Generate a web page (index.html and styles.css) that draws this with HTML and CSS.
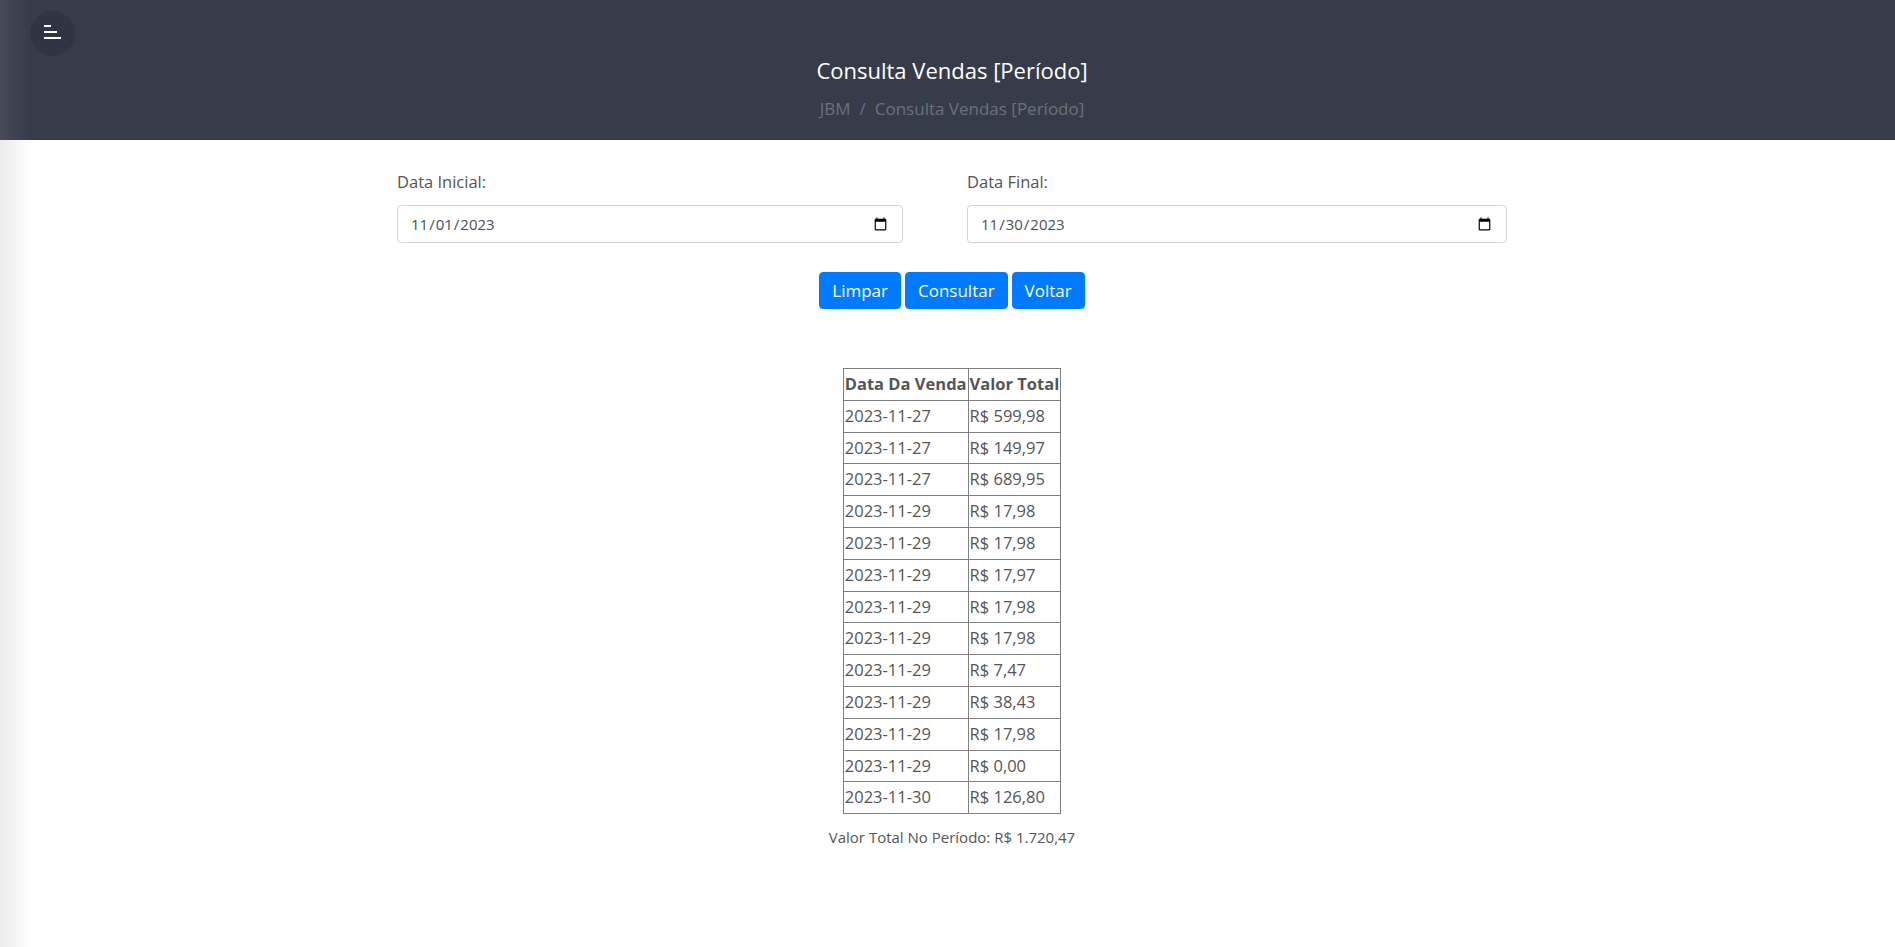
FILE: index.html
```html
<!DOCTYPE html>
<html lang="pt-BR">
<head>
<meta charset="utf-8">
<title>Consulta Vendas [Período]</title>
<link rel="stylesheet" href="styles.css">
</head>
<body>
<div class="edge-shadow"></div>
<header class="hero">
  <button class="menu-btn" type="button" aria-label="Menu">
    <svg width="45" height="45" viewBox="0 0 45 45">
      <rect x="14" y="14" width="7" height="2" fill="#fff"/>
      <rect x="14" y="20" width="13" height="2" fill="#fff"/>
      <rect x="14" y="26" width="17" height="2" fill="#fff"/>
    </svg>
  </button>
  <h1 class="hero-title">Consulta Vendas [Período]</h1>
  <nav class="crumbs"><span>JBM</span><span class="sep">/</span><span>Consulta Vendas [Período]</span></nav>
</header>
<main class="content">
  <form class="dates">
    <div class="field">
      <label for="ini">Data Inicial:</label>
      <input id="ini" type="date" value="2023-11-01">
    </div>
    <div class="field">
      <label for="fim">Data Final:</label>
      <input id="fim" type="date" value="2023-11-30">
    </div>
  </form>
  <div class="actions">
    <button class="btn" type="button">Limpar</button>
    <button class="btn" type="button">Consultar</button>
    <button class="btn" type="button">Voltar</button>
  </div>
  <table class="sales">
    <thead>
      <tr><th>Data Da Venda</th><th>Valor Total</th></tr>
    </thead>
    <tbody>
      <tr><td>2023-11-27</td><td>R$ 599,98</td></tr>
      <tr><td>2023-11-27</td><td>R$ 149,97</td></tr>
      <tr><td>2023-11-27</td><td>R$ 689,95</td></tr>
      <tr><td>2023-11-29</td><td>R$ 17,98</td></tr>
      <tr><td>2023-11-29</td><td>R$ 17,98</td></tr>
      <tr><td>2023-11-29</td><td>R$ 17,97</td></tr>
      <tr><td>2023-11-29</td><td>R$ 17,98</td></tr>
      <tr><td>2023-11-29</td><td>R$ 17,98</td></tr>
      <tr><td>2023-11-29</td><td>R$ 7,47</td></tr>
      <tr><td>2023-11-29</td><td>R$ 38,43</td></tr>
      <tr><td>2023-11-29</td><td>R$ 17,98</td></tr>
      <tr><td>2023-11-29</td><td>R$ 0,00</td></tr>
      <tr><td>2023-11-30</td><td>R$ 126,80</td></tr>
    </tbody>
  </table>
  <p class="total">Valor Total No Período: R$ 1.720,47</p>
</main>
</body>
</html>
```

FILE: styles.css
```css
* { box-sizing: border-box; }

html, body {
  margin: 0;
  padding: 0;
}

body {
  font-family: "Open Sans", "Liberation Sans", sans-serif;
  font-size: 16px;
  color: #555;
  background: #fff;
  min-height: 947px;
  position: relative;
}

.edge-shadow {
  position: absolute;
  left: 0;
  top: 0;
  bottom: 0;
  width: 30px;
  background: linear-gradient(to right, rgba(140, 140, 145, 0.18), rgba(140, 140, 145, 0));
  pointer-events: none;
  z-index: 5;
}

.hero {
  position: relative;
  height: 140px;
  background: #373c4a;
  padding: 55px 0 0 9px;
  text-align: center;
}

.menu-btn {
  position: absolute;
  left: 30px;
  top: 11px;
  width: 45px;
  height: 45px;
  padding: 0;
  border: 0;
  border-radius: 50%;
  background: #313541;
  display: flex;
  align-items: center;
  justify-content: center;
}

.hero-title {
  margin: 0;
  font-size: 22px;
  line-height: 30px;
  font-weight: 400;
  color: #fff;
}

.crumbs {
  margin-top: 12px;
  font-size: 17px;
  line-height: 24px;
  color: #6c717b;
  display: flex;
  justify-content: center;
  gap: 9px;
}

.content {
  display: flex;
  flex-direction: column;
  align-items: center;
  padding: 30px 0 0 9px;
}

.dates {
  display: grid;
  grid-template-columns: 506px 540px;
  column-gap: 64px;
  margin: 0;
}

.field {
  display: flex;
  flex-direction: column;
}

.field label {
  font-size: 16.5px;
  line-height: 24px;
  color: #555;
  margin-bottom: 11px;
}

.field input {
  height: 38px;
  border: 1px solid #ced4da;
  border-radius: 4px;
  padding: 6px 12px;
  font-family: "Open Sans", "Liberation Sans", sans-serif;
  font-size: 15px;
  color: #495057;
  background: #fff;
}

.actions {
  display: flex;
  gap: 4px;
  margin-top: 29px;
}

.btn {
  height: 37px;
  padding: 0 12px;
  border: 1px solid #007bff;
  border-radius: 4px;
  background: #007bff;
  color: #fff;
  font-family: "Open Sans", "Liberation Sans", sans-serif;
  font-size: 17px;
  line-height: 24px;
}

.sales {
  margin-top: 59px;
  border-collapse: collapse;
  border: 1px solid #808080;
  font-size: 16.5px;
  color: #555;
}

.sales th,
.sales td {
  border: 1px solid #808080;
  padding: 3px 1px;
  line-height: 24.8px;
  text-align: left;
}

.sales th {
  font-weight: 700;
}

.total {
  margin: 11px 0 0;
  font-size: 15px;
  line-height: 24px;
  color: #555;
}
```
